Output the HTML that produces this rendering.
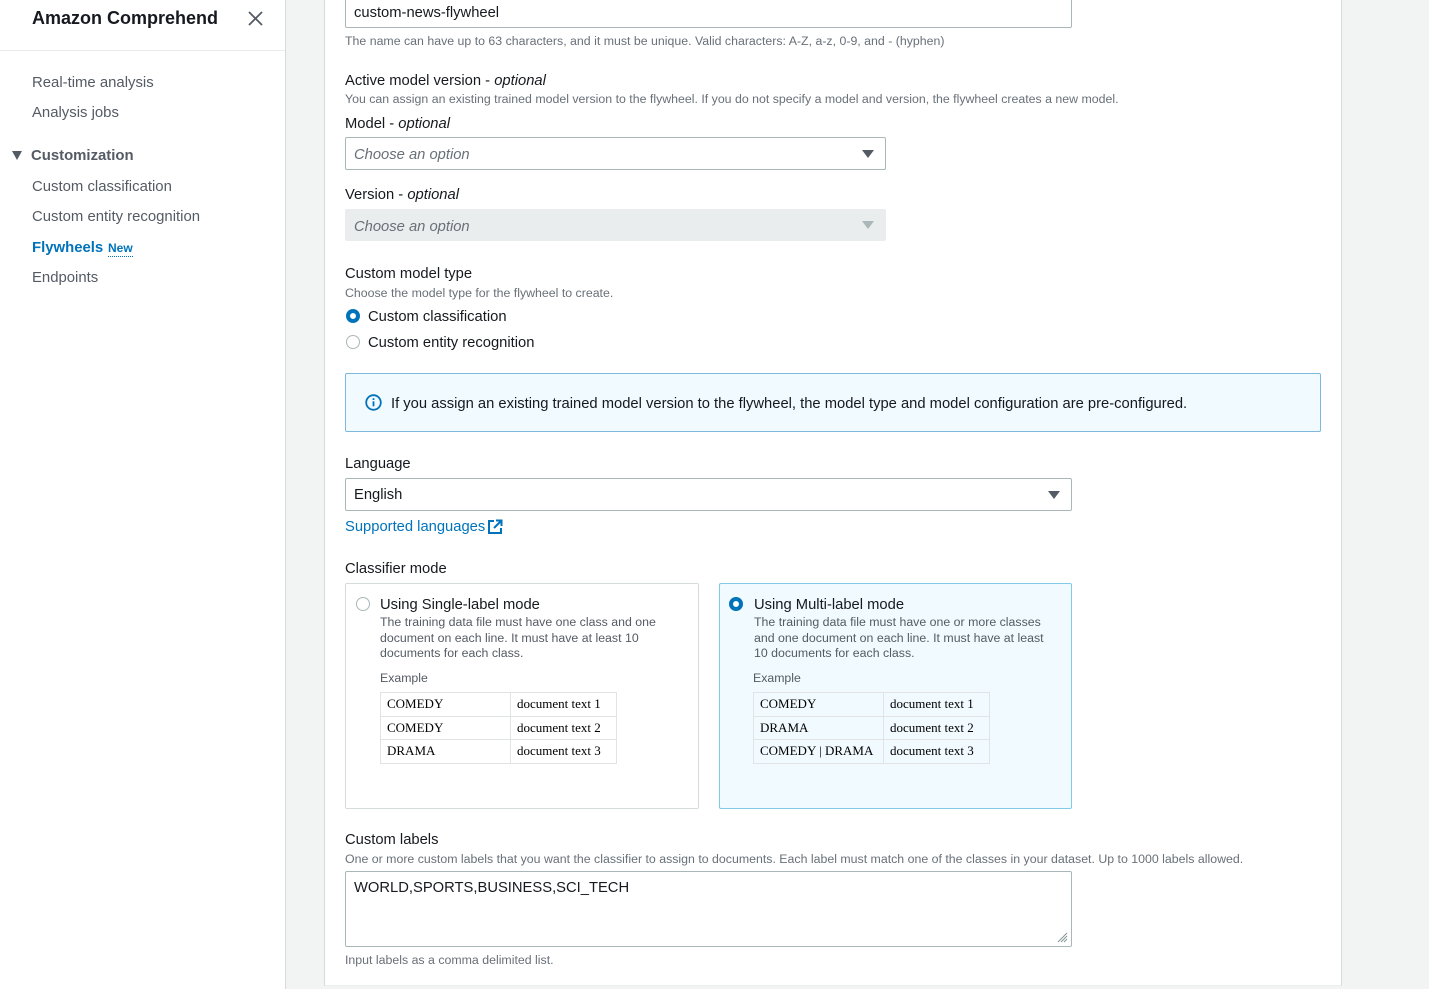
<!DOCTYPE html>
<html><head><meta charset="utf-8">
<style>
*{box-sizing:border-box;margin:0;padding:0}
body{width:1429px;height:989px;overflow:hidden;background:#f2f3f3;font-family:"Liberation Sans",sans-serif;color:#16191f;position:relative}
.a{position:absolute;white-space:nowrap}
.side{position:absolute;left:0;top:0;width:286px;height:989px;background:#fff;border-right:1px solid #d5dbdb}
.panel{position:absolute;left:324px;top:-2px;width:1018px;height:988px;background:#fff;border-left:1px solid #d5dbdb;border-right:1px solid #d5dbdb;border-bottom:1px solid #eaeded}
.nav{font-size:14.9px;color:#545b64}
.lbl{font-size:14.75px;color:#16191f}
.desc{font-size:12.35px;color:#687078}
.box{position:absolute;border:1px solid #aab7b8;border-radius:2px;background:#fff}
.ph{font-style:italic;color:#687078;font-size:14.75px}
.tri{position:absolute;width:0;height:0;border-left:6px solid transparent;border-right:6px solid transparent;border-top:8px solid #545b64}
.radio{position:absolute;width:14px;height:14px;border-radius:50%;border:1.5px solid #aab7b8;background:#fff}
.radio.on{border:4px solid #0073bb}
table{position:absolute;border-collapse:collapse;font-family:"Liberation Serif",serif;font-size:13px;color:#000}
td{border:1px solid #e1e4e4;height:23.5px;padding:0 6px}
</style></head><body>
<div class="side">
  <div class="a" style="left:32px;top:8px;font-size:18px;font-weight:bold;color:#16191f">Amazon Comprehend</div>
  <svg class="a" style="left:248px;top:11px" width="15" height="15" viewBox="0 0 15 15"><path d="M1 1L14 14M14 1L1 14" stroke="#545b64" stroke-width="1.8"/></svg>
  <div style="position:absolute;left:0;top:50px;width:285px;height:1px;background:#eaeded"></div>
  <div class="a nav" style="left:32px;top:75px">Real-time analysis</div>
  <div class="a nav" style="left:32px;top:105px">Analysis jobs</div>
  <div class="tri" style="left:12px;top:151px;border-left-width:5px;border-right-width:5px;border-top-width:9px;border-top-color:#545b64"></div>
  <div class="a nav" style="left:31px;top:148px;font-weight:bold">Customization</div>
  <div class="a nav" style="left:32px;top:179px">Custom classification</div>
  <div class="a nav" style="left:32px;top:209px">Custom entity recognition</div>
  <div class="a nav" style="left:32px;top:240px;color:#0073bb;font-weight:bold">Flywheels</div>
  <div class="a" style="left:108px;top:241px;font-size:12px;font-weight:bold;color:#0073bb;border-bottom:1px dotted #0073bb;padding-bottom:1px">New</div>
  <div class="a nav" style="left:32px;top:270px">Endpoints</div>
</div>
<div class="panel"></div>

<div class="box" style="left:345px;top:-4px;width:727px;height:32px"></div>
<div class="a lbl" style="left:354px;top:5px">custom-news-flywheel</div>
<div class="a desc" style="left:345px;top:34px">The name can have up to 63 characters, and it must be unique. Valid characters: A-Z, a-z, 0-9, and - (hyphen)</div>

<div class="a lbl" style="left:345px;top:73px">Active model version - <i>optional</i></div>
<div class="a desc" style="left:345px;top:92px">You can assign an existing trained model version to the flywheel. If you do not specify a model and version, the flywheel creates a new model.</div>
<div class="a lbl" style="left:345px;top:116px">Model - <i>optional</i></div>
<div class="box" style="left:345px;top:137px;width:541px;height:33px"></div>
<div class="a ph" style="left:354px;top:147px">Choose an option</div>
<div class="tri" style="left:862px;top:150px"></div>

<div class="a lbl" style="left:345px;top:187px">Version - <i>optional</i></div>
<div class="box" style="left:345px;top:209px;width:541px;height:32px;background:#eaeded;border-color:#eaeded"></div>
<div class="a ph" style="left:354px;top:219px">Choose an option</div>
<div class="tri" style="left:862px;top:221px;border-top-color:#aab7b8"></div>

<div class="a lbl" style="left:345px;top:266px">Custom model type</div>
<div class="a desc" style="left:345px;top:286px">Choose the model type for the flywheel to create.</div>
<div class="radio on" style="left:346px;top:309px"></div>
<div class="a lbl" style="left:368px;top:309px">Custom classification</div>
<div class="radio" style="left:346px;top:335px"></div>
<div class="a lbl" style="left:368px;top:335px">Custom entity recognition</div>

<div class="box" style="left:345px;top:373px;width:976px;height:59px;background:#f1faff;border-color:#7eb8dd"></div>
<svg class="a" style="left:365px;top:394px" width="17" height="17" viewBox="0 0 17 17"><circle cx="8.5" cy="8.5" r="7.3" fill="none" stroke="#0073bb" stroke-width="1.8"/><rect x="7.6" y="7.3" width="1.8" height="5" fill="#0073bb"/><rect x="7.6" y="4.2" width="1.8" height="1.8" fill="#0073bb"/></svg>
<div class="a lbl" style="left:391px;top:396px">If you assign an existing trained model version to the flywheel, the model type and model configuration are pre-configured.</div>

<div class="a lbl" style="left:345px;top:456px">Language</div>
<div class="box" style="left:345px;top:478px;width:727px;height:33px"></div>
<div class="a lbl" style="left:354px;top:487px">English</div>
<div class="tri" style="left:1048px;top:491px"></div>
<div class="a lbl" style="left:345px;top:519px;color:#0073bb">Supported languages</div>
<svg class="a" style="left:487px;top:519px" width="16" height="16" viewBox="0 0 16 16"><path d="M7 2H2V14H14V9" fill="none" stroke="#0073bb" stroke-width="2"/><path d="M9 1.5H14.5V7M14.5 1.5L7 9" fill="none" stroke="#0073bb" stroke-width="2"/></svg>

<div class="a lbl" style="left:345px;top:561px">Classifier mode</div>
<div class="box" style="left:345px;top:583px;width:354px;height:226px;border-color:#d5dbdb"></div>
<div class="radio" style="left:356px;top:597px"></div>
<div class="a lbl" style="left:380px;top:597px">Using Single-label mode</div>
<div class="a desc" style="left:380px;top:615px;line-height:15.5px;color:#545b64">The training data file must have one class and one<br>document on each line. It must have at least 10<br>documents for each class.</div>
<div class="a" style="left:380px;top:671px;font-size:12.3px;color:#545b64">Example</div>
<table style="left:380px;top:692px"><tr><td style="width:130px">COMEDY</td><td style="width:106px">document text 1</td></tr><tr><td>COMEDY</td><td>document text 2</td></tr><tr><td>DRAMA</td><td>document text 3</td></tr></table>

<div class="box" style="left:719px;top:583px;width:353px;height:226px;background:#f1faff;border-color:#7fcbe8"></div>
<div class="radio on" style="left:729px;top:597px"></div>
<div class="a lbl" style="left:754px;top:597px">Using Multi-label mode</div>
<div class="a desc" style="left:754px;top:615px;line-height:15.5px;color:#545b64">The training data file must have one or more classes<br>and one document on each line. It must have at least<br>10 documents for each class.</div>
<div class="a" style="left:753px;top:671px;font-size:12.3px;color:#545b64">Example</div>
<table style="left:753px;top:692px"><tr><td style="width:130px">COMEDY</td><td style="width:106px">document text 1</td></tr><tr><td>DRAMA</td><td>document text 2</td></tr><tr><td>COMEDY | DRAMA</td><td>document text 3</td></tr></table>

<div class="a lbl" style="left:345px;top:832px">Custom labels</div>
<div class="a desc" style="left:345px;top:852px">One or more custom labels that you want the classifier to assign to documents. Each label must match one of the classes in your dataset. Up to 1000 labels allowed.</div>
<div class="box" style="left:345px;top:871px;width:727px;height:76px"></div>
<div class="a lbl" style="left:354px;top:880px">WORLD,SPORTS,BUSINESS,SCI_TECH</div>
<svg class="a" style="left:1056px;top:931px" width="12" height="12" viewBox="0 0 12 12"><path d="M11 2L2 11M11 5L5 11M11 8L8 11" stroke="#879596" stroke-width="1"/></svg>
<div class="a desc" style="left:345px;top:953px">Input labels as a comma delimited list.</div>
</body></html>
